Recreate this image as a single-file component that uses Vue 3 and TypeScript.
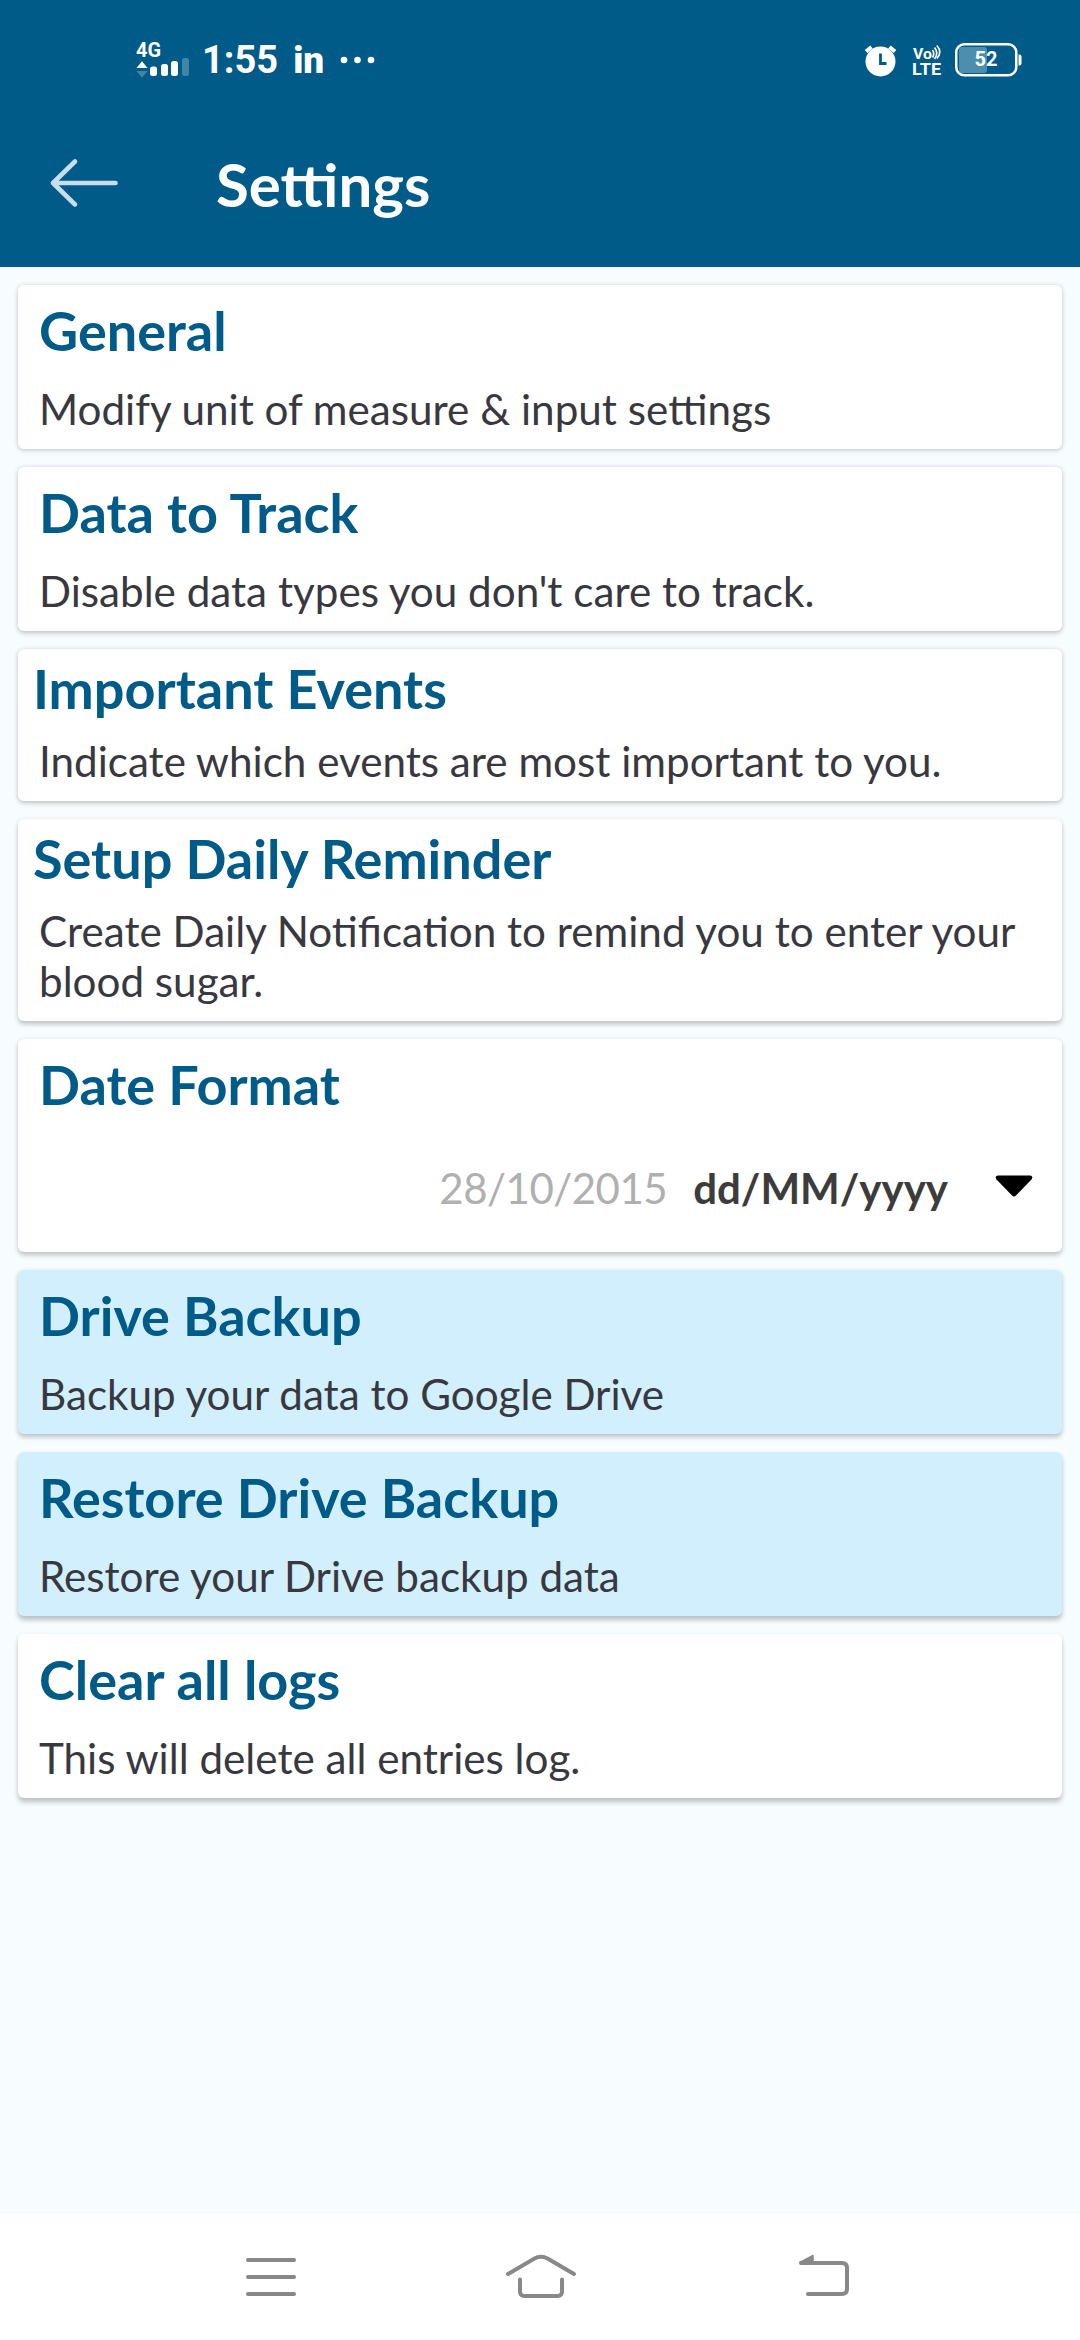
<script setup lang="ts">
interface Setting {
  title: string
  description?: string
  compact?: boolean
  highlighted?: boolean
  example?: string
  format?: string
}

const settings: Setting[] = [
  { title: 'General', description: 'Modify unit of measure & input settings' },
  { title: 'Data to Track', description: "Disable data types you don't care to track." },
  { title: 'Important Events', description: 'Indicate which events are most important to you.', compact: true },
  {
    title: 'Setup Daily Reminder',
    description: 'Create Daily Notification to remind you to enter your blood sugar.',
    compact: true,
  },
  { title: 'Date Format', example: '28/10/2015', format: 'dd/MM/yyyy' },
  { title: 'Drive Backup', description: 'Backup your data to Google Drive', highlighted: true },
  { title: 'Restore Drive Backup', description: 'Restore your Drive backup data', highlighted: true },
  { title: 'Clear all logs', description: 'This will delete all entries log.' },
]

// Shadows fall further below a card the lower it sits on the screen.
const shadow = (index: number) => ({ '--drop': `${(1 + index * 0.35).toFixed(2)}px` })
</script>

<template>
  <div class="screen">
    <header class="top">
      <div class="status">
        <svg class="signal" width="58" height="54" viewBox="-2 -7 58 54">
          <text x="0" y="17" font-size="20.5" font-weight="700" textLength="25" lengthAdjust="spacingAndGlyphs">4G</text>
          <path d="M0.5 28 6 21.2 11.5 28Z" />
          <g opacity=".25">
            <path d="M0.5 31 6 37.8 11.5 31Z" />
            <rect x="46" y="18" width="7" height="18" rx="2.5" />
          </g>
          <rect x="14" y="26.5" width="7" height="9.5" rx="2.5" />
          <rect x="25" y="24" width="7" height="12" rx="2.5" />
          <rect x="35" y="21" width="7" height="15" rx="2.5" />
        </svg>
        <span class="clock">1:55</span>
        <span class="linked">in</span>
        <svg class="dots" width="36" height="8" viewBox="0 0 36 8">
          <circle cx="4" cy="4" r="3.3" /><circle cx="17.5" cy="4" r="3.3" /><circle cx="31" cy="4" r="3.3" />
        </svg>
        <span class="spacer"></span>
        <svg class="alarm" width="34" height="34" viewBox="0 0 34 34">
          <circle cx="16.5" cy="18.5" r="15" />
          <path class="ears" d="M2 8.5 7.5 4M25.5 4l5.5 4.5" />
          <path class="hands" d="M16.5 10.5v10h6" />
        </svg>
        <svg class="volte" width="32" height="42" viewBox="0 -4 32 42">
          <text x="1" y="15.5" font-size="15.5" font-weight="700" textLength="19" lengthAdjust="spacingAndGlyphs">Vo</text>
          <path d="M20.5 7q2.5 3.5 0 7.5M22.5 4.5q4.5 5 0 11.5M24.8 2.5q6 6.5 0 13" />
          <text x="0" y="32" font-size="17" font-weight="700" textLength="29" lengthAdjust="spacingAndGlyphs">LTE</text>
        </svg>
        <svg class="battery" width="68" height="34" viewBox="0 0 68 34">
          <rect class="level" x="4" y="4" width="28" height="26" rx="3" />
          <rect class="shell" x="1.25" y="1.25" width="60" height="31" rx="8" />
          <path d="M63.5 11.5h1a2 2 0 0 1 2 2v7a2 2 0 0 1-2 2h-1z" />
          <text x="19.5" y="23" font-size="21" font-weight="700" textLength="23" lengthAdjust="spacingAndGlyphs">52</text>
        </svg>
      </div>
      <div class="bar">
        <svg class="back" width="70" height="52" viewBox="0 0 70 52">
          <path d="M27 4.5 5 26 27 47.5M5 26h62.5" />
        </svg>
        <h1>Settings</h1>
      </div>
    </header>

    <main>
      <section
        v-for="(item, index) in settings"
        :key="item.title"
        class="card"
        :class="{ compact: item.compact, highlighted: item.highlighted }"
        :style="shadow(index)"
      >
        <h2>{{ item.title }}</h2>
        <p v-if="item.description">{{ item.description }}</p>
        <div v-else class="picker">
          <span class="example">{{ item.example }}</span>
          <span class="format">{{ item.format }}</span>
          <svg width="38" height="22" viewBox="0 0 38 22">
            <path d="M3 0.5h32q3.5.5 1.5 4L21 20.5q-2 2-4 0L1.5 4.5q-2-3.5 1.5-4z" />
          </svg>
        </div>
      </section>
    </main>

    <nav>
      <svg width="52" height="46" viewBox="0 0 52 46"><path d="M3 6h46M3 23h46M3 40h46" /></svg>
      <svg class="home" width="72" height="46" viewBox="0 0 72 46">
        <path d="M3 20 29.5 4.5q6.5-3.5 13 0L69 20M15 25.5v12q0 4.5 4.5 4.5h33q4.5 0 4.5-4.5v-12" />
      </svg>
      <svg class="return" width="54" height="46" viewBox="0 0 54 46">
        <path d="M4 9h41q5 0 5 5v21q0 5-5 5H11" />
        <path class="tip" d="M3 8.5 16 1.5V8z" />
      </svg>
    </nav>
  </div>
</template>

<style>
body {
  background: #f7fcff;
}
</style>

<style scoped>
.screen {
  display: flex;
  flex-direction: column;
  width: 1080px;
  height: 2340px;
  overflow: hidden;
  background: #f7fcff;
  font-family: Lato, sans-serif;
}
.top {
  flex: none;
  height: 267px;
  background: #005b88;
  color: #fff;
}
.status {
  display: flex;
  align-items: center;
  height: 120px;
  padding: 0 57px 0 134px;
  font-family: Roboto, sans-serif;
  fill: #fff;
}
.status svg {
  flex: none;
}
.clock {
  margin-left: 10px;
  font-size: 38px;
  font-weight: 700;
}
.linked {
  margin-left: 15px;
  font-size: 37px;
  font-weight: 900;
}
.dots {
  margin-left: 16px;
}
.spacer {
  flex: 1;
}
.ears {
  fill: none;
  stroke: #fff;
  stroke-width: 4;
}
.hands {
  fill: none;
  stroke: #005b88;
  stroke-width: 2.8;
}
.volte {
  margin-left: 14px;
}
.volte path {
  fill: none;
  stroke: #fff;
  stroke-width: 1.6;
}
.battery {
  margin-left: 11px;
}
.level {
  fill: #4d8dae;
}
.shell {
  fill: none;
  stroke: #fff;
  stroke-width: 2.5;
}
.bar {
  display: flex;
  align-items: center;
  height: 126px;
  padding-left: 48px;
}
.back {
  fill: none;
  stroke: #c8deeb;
  stroke-width: 4.6;
  stroke-linecap: round;
  stroke-linejoin: round;
}
h1 {
  margin: 2px 0 0 98px;
  font-size: 60px;
  line-height: 72px;
  font-weight: 700;
}
main {
  flex: 1;
  display: flex;
  flex-direction: column;
  gap: 18px;
  padding: 18px 18px 0;
}
.card {
  padding: 11px 21px 15px;
  border-radius: 6px;
  background: #fff;
  box-shadow: 0 var(--drop) 5px rgba(0, 0, 0, 0.24);
}
.highlighted {
  background: #d2effd;
}
h2 {
  margin: 0;
  height: 88px;
  font-size: 54px;
  line-height: 70px;
  font-weight: 700;
  color: #005b88;
}
p {
  margin: 0;
  font-size: 42.2px;
  line-height: 50px;
  color: #38383f;
}
.compact {
  padding-top: 5px;
}
.compact h2 {
  height: 82px;
  margin-left: -6px;
}
.picker {
  display: flex;
  align-items: center;
  justify-content: flex-end;
  height: 50px;
  padding: 25px 8px 24px 0;
  font-size: 42px;
}
.picker svg {
  margin-bottom: 5px;
}
.example {
  letter-spacing: -0.5px;
  color: #b0b0b0;
}
.format {
  margin: 0 47px 0 26px;
  font-weight: 700;
  color: #3c3c3c;
}
nav {
  flex: none;
  display: flex;
  align-items: center;
  height: 126px;
  padding-left: 245px;
  background: #fff;
}
.home {
  margin-left: 208px;
}
.return {
  margin-left: 220px;
}
nav path {
  fill: none;
  stroke: #888;
  stroke-width: 4;
  stroke-linecap: round;
  stroke-linejoin: round;
}
nav .tip {
  fill: #888;
  stroke-width: 1.5;
}
</style>
